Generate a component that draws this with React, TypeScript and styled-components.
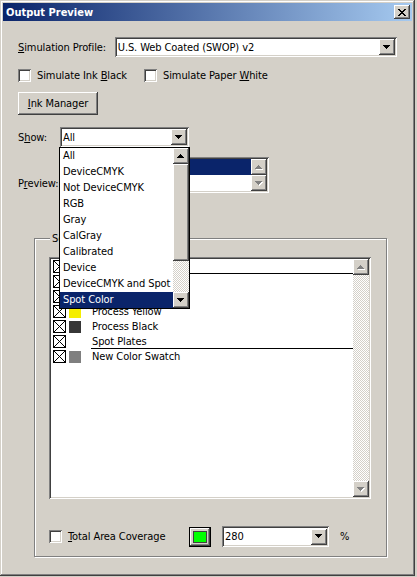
import styled, { createGlobalStyle, css } from "styled-components";

const GlobalStyle = createGlobalStyle`
  html, body {
    margin: 0;
    padding: 0;
    background: #d4d0c8;
  }
  body {
    font-family: "DejaVu Sans", "Liberation Sans", sans-serif;
    font-stretch: condensed;
    font-size: 11px;
    letter-spacing: -0.1px;
    color: #000;
  }
  * { box-sizing: border-box; }
`;

const raised = css`
  box-shadow: inset -1px -1px #404040, inset 1px 1px #fff,
    inset -2px -2px #808080, inset 2px 2px #d4d0c8;
`;

const sunken = css`
  box-shadow: inset 1px 1px #808080, inset -1px -1px #fff,
    inset 2px 2px #404040, inset -2px -2px #d4d0c8;
`;

const dither = css`
  background: repeating-conic-gradient(#fff 0 25%, #d4d0c8 0 50%) 0 0 / 2px 2px;
`;

const Window = styled.div`
  width: 415px;
  height: 576px;
  padding: 3px;
  background: #d4d0c8;
  display: flex;
  flex-direction: column;
  box-shadow: inset -1px -1px #404040, inset 1px 1px #d4d0c8,
    inset -2px -2px #808080, inset 2px 2px #fff;
`;

const TitleBar = styled.div`
  height: 18px;
  display: flex;
  align-items: center;
  justify-content: space-between;
  padding: 0 2px 0 3px;
  background: linear-gradient(to right, #0a246a, #a6caf0);
`;

const Title = styled.span`
  color: #fff;
  font-weight: bold;
  font-size: 11px;
  letter-spacing: 0;
`;

const CloseButton = styled.div`
  width: 16px;
  height: 14px;
  background: #d4d0c8;
  display: flex;
  align-items: center;
  justify-content: center;
  ${raised}
`;

const Body = styled.div`
  flex: 1;
  display: flex;
  flex-direction: column;
  padding: 16px 15px 0 15px;
`;

const Row = styled.div<{ $top?: number }>`
  display: flex;
  align-items: center;
  margin-top: ${(p) => p.$top ?? 0}px;
`;

const Label = styled.span<{ $width?: number }>`
  display: inline-block;
  width: ${(p) => (p.$width ? `${p.$width}px` : "auto")};
  white-space: nowrap;
`;

const Combo = styled.div<{ $width: number; $height?: number }>`
  position: relative;
  width: ${(p) => p.$width}px;
  height: ${(p) => p.$height ?? 20}px;
  background: #fff;
  padding: 2px;
  display: flex;
  align-items: center;
  ${sunken}
`;

const ComboText = styled.span`
  flex: 1;
  padding-left: 1px;
  white-space: nowrap;
`;

const ArrowButton = styled.div<{ $height?: number }>`
  width: 16px;
  height: ${(p) => p.$height ?? 16}px;
  flex: none;
  background: #d4d0c8;
  display: flex;
  align-items: center;
  justify-content: center;
  ${raised}
`;

const CheckBox = styled.span`
  width: 13px;
  height: 13px;
  flex: none;
  background: #fff;
  ${sunken}
`;

const CheckItem = styled.label<{ $width?: number }>`
  display: flex;
  align-items: center;
  gap: 6px;
  width: ${(p) => (p.$width ? `${p.$width}px` : "auto")};
`;

const PushButton = styled.div`
  margin-top: 10px;
  width: 80px;
  height: 23px;
  display: flex;
  align-items: center;
  justify-content: center;
  background: #d4d0c8;
  ${raised}
`;

const DropList = styled.div`
  position: absolute;
  top: 20px;
  left: -1px;
  width: 131px;
  height: 162px;
  border: 1px solid #000;
  background: #fff;
  display: flex;
  z-index: 5;
`;

const Options = styled.div`
  flex: 1;
  display: flex;
  flex-direction: column;
`;

const OptionItem = styled.div<{ $selected?: boolean }>`
  height: 16px;
  line-height: 16px;
  padding-left: 3px;
  white-space: nowrap;
  background: ${(p) => (p.$selected ? "#0a246a" : "#fff")};
  color: ${(p) => (p.$selected ? "#fff" : "#000")};
`;

const ScrollBar = styled.div`
  width: 16px;
  flex: none;
  display: flex;
  flex-direction: column;
`;

const Track = styled.div`
  flex: 1;
  ${dither}
`;

const Thumb = styled.div<{ $height: number }>`
  height: ${(p) => p.$height}px;
  flex: none;
  background: #d4d0c8;
  ${raised}
`;

const PreviewRow = styled.div`
  display: flex;
  align-items: flex-start;
  margin-top: 10px;
`;

const PreviewLabel = styled.span`
  width: 42px;
  padding-top: 20px;
  white-space: nowrap;
`;

const ListBox = styled.div<{ $width: number; $height: number }>`
  width: ${(p) => p.$width}px;
  height: ${(p) => p.$height}px;
  padding: 2px;
  background: #fff;
  display: flex;
  ${sunken}
`;

const ListRows = styled.div`
  flex: 1;
  display: flex;
  flex-direction: column;
`;

const HighlightRow = styled.div<{ $on?: boolean }>`
  height: 16px;
  background: ${(p) => (p.$on ? "#0a246a" : "#fff")};
`;

const GroupBox = styled.div`
  position: relative;
  margin: 45px 0 0 16px;
  width: 353px;
  height: 319px;
  border: 1px solid #808080;
  box-shadow: inset 1px 1px #fff, 1px 1px #fff;
  padding: 18px 0 0 14px;
  display: flex;
  flex-direction: column;
`;

const Legend = styled.span`
  position: absolute;
  top: -7px;
  left: 15px;
  padding: 0 2px;
  background: #d4d0c8;
`;

const SepList = styled.div`
  width: 322px;
  height: 242px;
  padding: 2px;
  background: #fff;
  display: flex;
  ${sunken}
`;

const SepRow = styled.div`
  height: 15px;
  display: flex;
  align-items: center;
  padding-left: 2px;
`;

const Swatch = styled.span<{ $color?: string }>`
  width: 12px;
  height: 12px;
  margin-left: 3px;
  flex: none;
  background: ${(p) => p.$color ?? "transparent"};
`;

const SepName = styled.span<{ $heading?: boolean }>`
  margin-left: 11px;
  white-space: nowrap;
  ${(p) =>
    p.$heading &&
    css`
      flex: 1;
      align-self: stretch;
      display: flex;
      align-items: center;
      margin-left: 25px;
      padding-left: 1px;
      border-bottom: 1px solid #000;
    `}
`;

const BottomRow = styled.div`
  display: flex;
  align-items: center;
  margin-top: 27px;
  height: 21px;
`;

const ColorButton = styled.div`
  width: 22px;
  height: 20px;
  border: 1px solid #000;
  background: #d4d0c8;
  display: flex;
  align-items: center;
  justify-content: center;
  margin-right: 11px;
  ${raised}
`;

const ColorChip = styled.span`
  width: 14px;
  height: 12px;
  background: #00ff00;
  border: 1px solid #404040;
`;

const Percent = styled.span`
  margin-left: 11px;
`;

const U = styled.span`
  text-decoration: underline;
`;

function DownArrow({ disabled }: { disabled?: boolean }) {
  const d = "M0 0h7v1h-1v1h-1v1h-1v1h-1v-1h-1v-1h-1v-1h-1z";
  return (
    <svg width="8" height="5" viewBox="0 0 8 5">
      {disabled && <path d={d} fill="#fff" transform="translate(1 1)" />}
      <path d={d} fill={disabled ? "#808080" : "#000"} />
    </svg>
  );
}

function UpArrow({ disabled }: { disabled?: boolean }) {
  const d = "M3 0h1v1h1v1h1v1h1v1h-7v-1h1v-1h1v-1h1z";
  return (
    <svg width="8" height="5" viewBox="0 0 8 5">
      {disabled && <path d={d} fill="#fff" transform="translate(1 1)" />}
      <path d={d} fill={disabled ? "#808080" : "#000"} />
    </svg>
  );
}

function CloseGlyph() {
  return (
    <svg width="8" height="7" viewBox="0 0 8 7">
      <path
        d="M0 0h2v1h1v1h2v-1h1v-1h2v1h-1v1h-1v1h-1v1h1v1h1v1h1v1h-2v-1h-1v-1h-2v1h-1v1h-2v-1h1v-1h1v-1h1v-1h-1v-1h-1v-1h-1z"
        fill="#000"
      />
    </svg>
  );
}

function XBox() {
  return (
    <svg width="13" height="13" viewBox="0 0 13 13" style={{ flex: "none" }}>
      <rect x="0.5" y="0.5" width="12" height="12" fill="#fff" stroke="#000" />
      <path d="M1 1L12 12M12 1L1 12" stroke="#000" strokeWidth="1" />
    </svg>
  );
}

const showOptions = [
  "All",
  "DeviceCMYK",
  "Not DeviceCMYK",
  "RGB",
  "Gray",
  "CalGray",
  "Calibrated",
  "Device",
  "DeviceCMYK and Spot",
  "Spot Color",
];

const separations: { name: string; color?: string; heading?: boolean }[] = [
  { name: "Process Plates", heading: true },
  { name: "Process Cyan", color: "#00ffff" },
  { name: "Process Magenta", color: "#ff00ff" },
  { name: "Process Yellow", color: "#f5ee00" },
  { name: "Process Black", color: "#363636" },
  { name: "Spot Plates", heading: true },
  { name: "New Color Swatch", color: "#7f7f7f" },
];

export default function App() {
  return (
    <>
      <GlobalStyle />
      <Window>
        <TitleBar>
          <Title>Output Preview</Title>
          <CloseButton>
            <CloseGlyph />
          </CloseButton>
        </TitleBar>
        <Body>
          <Row>
            <Label $width={97}>
              <U>S</U>imulation Profile:
            </Label>
            <Combo $width={283}>
              <ComboText>U.S. Web Coated (SWOP) v2</ComboText>
              <ArrowButton>
                <DownArrow />
              </ArrowButton>
            </Combo>
          </Row>
          <Row $top={12}>
            <CheckItem $width={126}>
              <CheckBox />
              <span>
                Simulate Ink <U>B</U>lack
              </span>
            </CheckItem>
            <CheckItem>
              <CheckBox />
              <span>
                Simulate Paper <U>W</U>hite
              </span>
            </CheckItem>
          </Row>
          <PushButton>
            <span>
              <U>I</U>nk Manager
            </span>
          </PushButton>
          <Row $top={12}>
            <Label $width={42}>
              S<U>h</U>ow:
            </Label>
            <Combo $width={129}>
              <ComboText>All</ComboText>
              <ArrowButton>
                <DownArrow />
              </ArrowButton>
              <DropList>
                <Options>
                  {showOptions.map((o) => (
                    <OptionItem key={o} $selected={o === "Spot Color"}>
                      {o}
                    </OptionItem>
                  ))}
                </Options>
                <ScrollBar>
                  <ArrowButton>
                    <UpArrow />
                  </ArrowButton>
                  <Thumb $height={97} />
                  <Track />
                  <ArrowButton>
                    <DownArrow />
                  </ArrowButton>
                </ScrollBar>
              </DropList>
            </Combo>
          </Row>
          <PreviewRow>
            <PreviewLabel>
              P<U>r</U>eview:
            </PreviewLabel>
            <ListBox $width={209} $height={36}>
              <ListRows>
                <HighlightRow $on />
                <HighlightRow />
              </ListRows>
              <ScrollBar>
                <ArrowButton>
                  <UpArrow disabled />
                </ArrowButton>
                <ArrowButton>
                  <DownArrow disabled />
                </ArrowButton>
              </ScrollBar>
            </ListBox>
          </PreviewRow>
          <GroupBox>
            <Legend>Separations</Legend>
            <SepList>
              <ListRows>
                {separations.map((s) => (
                  <SepRow key={s.name}>
                    <XBox />
                    {s.heading ? (
                      <SepName $heading>{s.name}</SepName>
                    ) : (
                      <>
                        <Swatch $color={s.color} />
                        <SepName>{s.name}</SepName>
                      </>
                    )}
                  </SepRow>
                ))}
              </ListRows>
              <ScrollBar>
                <ArrowButton>
                  <UpArrow disabled />
                </ArrowButton>
                <Track />
                <ArrowButton>
                  <DownArrow disabled />
                </ArrowButton>
              </ScrollBar>
            </SepList>
            <BottomRow>
              <CheckItem $width={140}>
                <CheckBox />
                <span>
                  <U>T</U>otal Area Coverage
                </span>
              </CheckItem>
              <ColorButton>
                <ColorChip />
              </ColorButton>
              <Combo $width={107} $height={21}>
                <ComboText>280</ComboText>
                <ArrowButton>
                  <DownArrow />
                </ArrowButton>
              </Combo>
              <Percent>%</Percent>
            </BottomRow>
          </GroupBox>
        </Body>
      </Window>
    </>
  );
}
